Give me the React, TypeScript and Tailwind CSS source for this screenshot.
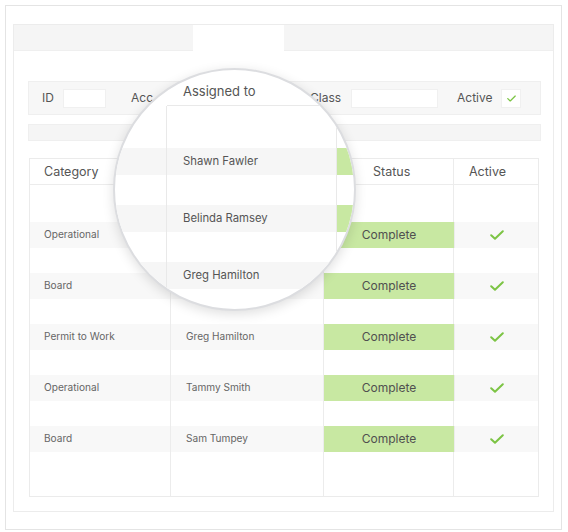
import React from "react";

const Check = ({ w = 14, h = 10 }: { w?: number; h?: number }) => (
  <svg width={w} height={h} viewBox="0 0 14 10" fill="none">
    <path d="M1.2 5.2 L5 8.8 L12.8 1.2" stroke="#7cc444" strokeWidth="2" strokeLinecap="round" strokeLinejoin="round" />
  </svg>
);

// names of the first two rows sit under the magnifier lens, which shows them enlarged
const rows = [
  { cat: "Operational", name: "" },
  { cat: "Board", name: "" },
  { cat: "Permit to Work", name: "Greg Hamilton" },
  { cat: "Operational", name: "Tammy Smith" },
  { cat: "Board", name: "Sam Tumpey" },
];

const cell = "border-r border-[#ececec]";

function Spacer({ h }: { h: string }) {
  return (
    <div className={`grid grid-cols-[141px_153px_130px_1fr] shrink-0 ${h}`}>
      <div className={cell} />
      <div className={cell} />
      <div className={cell} />
      <div />
    </div>
  );
}

function LensRow({ h, stripe, name }: { h: string; stripe?: boolean; name?: string }) {
  return (
    <div className={`flex shrink-0 ${h} ${stripe ? "bg-[#f6f6f6]" : ""}`}>
      <div className="w-[51px] shrink-0" />
      <div className="w-[171px] shrink-0 border-l border-r border-[#e9e9e9] flex items-center pl-[16px] text-[11.3px] text-[#555]">
        {name}
      </div>
      <div className={`flex-1 ${stripe ? "bg-[#c8e8a2]" : ""}`} />
    </div>
  );
}

export default function App() {
  return (
    <div
      className="w-[568px] h-[532px] bg-white relative pt-[5px] pl-[5px]"
      style={{ fontFamily: "Inter, 'Noto Sans', sans-serif" }}
    >
      <div className="w-[557px] h-[525px] border border-[#e4e4e4] pt-[18px] pl-[7px]">
        <div className="w-[541px] h-[488px] border border-[#ececec] flex flex-col">
          {/* tab bar */}
          <div className="h-[26px] bg-[#f5f5f5] border-b border-[#efefef] flex shrink-0">
            <div className="ml-[179px] w-[91px] h-[26px] bg-white" />
          </div>
          {/* filter bar */}
          <div className="mt-[30px] ml-[14px] w-[513px] h-[34px] bg-[#f7f7f7] border border-[#efefef] flex items-center text-[12px] text-[#555] shrink-0">
            <span className="ml-[13px] w-[21px]">ID</span>
            <div className="w-[43px] h-[19px] bg-white border border-[#f0f0f0]" />
            <span className="ml-[25px] w-[59px]">Acc</span>
            <div className="w-[100px] h-[19px] bg-white border border-[#f0f0f0]" />
            <span className="ml-[20px] w-[41px]">Class</span>
            <div className="w-[87px] h-[19px] bg-white border border-[#f0f0f0]" />
            <span className="ml-[19px] w-[44px]">Active</span>
            <div className="w-[20px] h-[19px] bg-white border border-[#f0f0f0] flex items-center justify-center">
              <Check w={9} h={7} />
            </div>
          </div>
          {/* second bar */}
          <div className="mt-[9px] ml-[14px] w-[513px] h-[17px] bg-[#f5f5f5] border border-[#efefef] shrink-0" />
          {/* table */}
          <div className="mt-[17px] ml-[15px] w-[510px] h-[339px] border border-[#ebebeb] flex flex-col shrink-0">
            <div className="grid grid-cols-[141px_153px_130px_1fr] h-[26px] border-b border-[#ececec] text-[12.5px] text-[#555] shrink-0">
              <div className={`${cell} flex items-center pl-[14px] pt-[2px]`}>Category</div>
              <div className={cell} />
              <div className={`${cell} flex items-center pl-[49px] pt-[2px]`}>Status</div>
              <div className="flex items-center pl-[15px] pt-[2px]">Active</div>
            </div>
            <Spacer h="h-[37px]" />
            {rows.map((r, i) => (
              <React.Fragment key={i}>
                {i > 0 && <Spacer h="h-[25px]" />}
                <div className="grid grid-cols-[141px_153px_130px_1fr] h-[26px] bg-[#f8f8f8] shrink-0">
                  <div className={`${cell} flex items-center pl-[14px] text-[10.1px] text-[#666]`}>{r.cat}</div>
                  <div className={`${cell} flex items-center pl-[15px] text-[10.1px] text-[#666]`}>{r.name}</div>
                  <div className="bg-[#c8e8a2] flex items-center justify-center text-[12px] text-[#505050]">Complete</div>
                  <div className="border-l border-[#ececec] flex items-center justify-center">
                    <Check />
                  </div>
                </div>
              </React.Fragment>
            ))}
            <div className="flex-1 grid grid-cols-[141px_153px_130px_1fr]">
              <div className={cell} />
              <div className={cell} />
              <div className={cell} />
              <div />
            </div>
          </div>
        </div>
      </div>

      {/* magnifier lens */}
      <div className="absolute left-[113px] top-[68px] w-[243px] h-[243px] rounded-full overflow-hidden bg-white border-2 border-[#dcdde0] shadow-[0_3px_12px_rgba(0,0,0,0.13)] flex flex-col">
        <div className="flex h-[36px] shrink-0">
          <div className="w-[52px] shrink-0" />
          <div className="flex-1 border-b border-[#e9e9e9] pt-[13px] pl-[16px] text-[13px] leading-[16px] text-[#555]">
            Assigned to
          </div>
        </div>
        <LensRow h="h-[42px]" />
        <LensRow h="h-[27px]" stripe name="Shawn Fawler" />
        <LensRow h="h-[30px]" />
        <LensRow h="h-[27px]" stripe name="Belinda Ramsey" />
        <LensRow h="h-[30px]" />
        <LensRow h="h-[27px]" stripe name="Greg Hamilton" />
        <LensRow h="h-[40px]" />
      </div>
    </div>
  );
}
